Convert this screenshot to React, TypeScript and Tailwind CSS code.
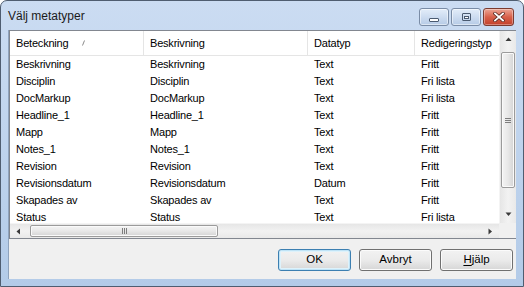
import React from 'react';

const rows: string[][] = [
  ['Beskrivning', 'Beskrivning', 'Text', 'Fritt'],
  ['Disciplin', 'Disciplin', 'Text', 'Fri lista'],
  ['DocMarkup', 'DocMarkup', 'Text', 'Fri lista'],
  ['Headline_1', 'Headline_1', 'Text', 'Fritt'],
  ['Mapp', 'Mapp', 'Text', 'Fritt'],
  ['Notes_1', 'Notes_1', 'Text', 'Fritt'],
  ['Revision', 'Revision', 'Text', 'Fritt'],
  ['Revisionsdatum', 'Revisionsdatum', 'Datum', 'Fritt'],
  ['Skapades av', 'Skapades av', 'Text', 'Fritt'],
  ['Status', 'Status', 'Text', 'Fri lista'],
];

function Arrow({ dir }: { dir: 'up' | 'down' | 'left' | 'right' }) {
  const pts = {
    up: '0.5,4 3.5,0.5 6.5,4',
    down: '0.5,0.5 3.5,4 6.5,0.5',
    left: '4,0.5 0.5,3.5 4,6.5',
    right: '0.5,0.5 4,3.5 0.5,6.5',
  }[dir];
  const vertical = dir === 'up' || dir === 'down';
  return (
    <svg width={vertical ? 7 : 5} height={vertical ? 5 : 7} viewBox={vertical ? '0 0 7 5' : '0 0 5 7'}>
      <polygon points={pts} fill="#3a3a3a" />
    </svg>
  );
}

function TitleButton({ kind }: { kind: 'min' | 'max' | 'close' }) {
  if (kind === 'close') {
    return (
      <div className="w-[31px] h-[18px] rounded-[3px] border border-[#7b3b30] bg-gradient-to-b from-[#eba595] via-[#d8604a] to-[#c2412b] flex items-center justify-center shadow-[inset_0_0_0_1px_rgba(255,255,255,0.35)]">
        <svg width="12" height="10" viewBox="0 0 12 10">
          <path d="M2 1.5 L10 8.5 M10 1.5 L2 8.5" stroke="#5a2a22" strokeWidth="3.4" strokeLinecap="square" />
          <path d="M2 1.5 L10 8.5 M10 1.5 L2 8.5" stroke="#ffffff" strokeWidth="1.8" strokeLinecap="square" />
        </svg>
      </div>
    );
  }
  return (
    <div className="w-[30px] h-[18px] rounded-[3px] border border-[#7a8ca6] bg-gradient-to-b from-[#e3edf9] via-[#cddcf0] to-[#b6cbe6] flex items-center justify-center shadow-[inset_0_0_0_1px_rgba(255,255,255,0.5)]">
      {kind === 'min' ? (
        <div className="w-[10px] h-[4px] mt-[5px] bg-white border border-[#4a5a70] rounded-[1px]" />
      ) : (
        <div className="w-[9px] h-[8px] bg-transparent border border-[#4a5a70] rounded-[1px] flex items-center justify-center">
          <div className="w-[5px] h-[3px] border border-[#4a5a70] bg-white" />
        </div>
      )}
    </div>
  );
}

function DialogButton({ children, primary = false }: { children: React.ReactNode; primary?: boolean }) {
  return (
    <div
      className={
        primary
          ? 'w-[73px] h-[22px] rounded-[3px] border border-[#3c7fb1] bg-gradient-to-b from-[#f2f2f2] via-[#ebebeb] to-[#d6d6d6] shadow-[inset_0_0_0_1px_#bfe3f6,inset_0_0_0_2px_#def2fb] flex items-center justify-center text-[11.5px] text-black'
          : 'w-[73px] h-[22px] rounded-[3px] border border-[#707070] bg-gradient-to-b from-[#f2f2f2] via-[#ebebeb] to-[#d6d6d6] shadow-[inset_0_0_0_1px_#fbfbfb] flex items-center justify-center text-[11.5px] text-black'
      }
    >
      {children}
    </div>
  );
}

export default function App() {
  const cols = ['w-[134px]', 'w-[164px]', 'w-[107px]', 'w-[84px]'];
  return (
    <div
      className="w-[524px] h-[287px] flex flex-col border border-[#4f5d70] rounded-t-[7px] overflow-hidden bg-gradient-to-b from-[#cbdcf2] to-[#b3cbe8]"
      style={{ fontFamily: '"Liberation Sans", Arial, sans-serif' }}
    >
      {/* Title bar */}
      <div className="h-[29px] flex items-start pl-[7px] pr-[9px]">
        <div className="mt-[8px] text-[12px] text-[#1a1a1a] leading-[14px]">Välj metatyper</div>
        <div className="ml-auto mt-[7px] flex gap-[2px]">
          <TitleButton kind="min" />
          <TitleButton kind="max" />
          <TitleButton kind="close" />
        </div>
      </div>

      {/* Body */}
      <div className="flex flex-1">
        <div className="w-[7px]" />
        <div className="w-[508px] h-[249px] bg-[#f0f0f0] flex flex-col border-l border-[#8fa3bd]">
          {/* List view */}
          <div className="h-[209px] border border-[#828790] bg-white grid grid-cols-[489px_17px] grid-rows-[192px_15px] text-[11px] tracking-[-0.2px] text-black">
            <div className="overflow-hidden">
              {/* Header */}
              <div className="h-[25px] flex border-b border-[#e5e5e5]">
                {['Beteckning', 'Beskrivning', 'Datatyp', 'Redigeringstyp'].map((h, i) => (
                  <div
                    key={h}
                    className={`${cols[i]} shrink-0 flex items-center pl-[6px] ${i < 3 ? 'border-r border-[#e5e5e5]' : ''} whitespace-nowrap overflow-hidden`}
                  >
                    <span>{h}</span>
                    {i === 0 && (
                      <svg className="ml-[14px]" width="3" height="6" viewBox="0 0 3 6">
                        <path d="M0.5 5.5 L2.5 0.5" stroke="#8a8a8a" strokeWidth="1" />
                      </svg>
                    )}
                  </div>
                ))}
              </div>
              {/* Rows */}
              {rows.map((r) => (
                <div key={r[0]} className="h-[17px] flex items-center">
                  {r.map((c, i) => (
                    <div key={i} className={`${cols[i]} shrink-0 pl-[6px] whitespace-nowrap overflow-hidden leading-[17px]`}>
                      {c}
                    </div>
                  ))}
                </div>
              ))}
            </div>

            {/* Vertical scrollbar */}
            <div className="row-span-1 flex flex-col bg-gradient-to-r from-[#e6e6e6] via-[#f2f2f2] to-[#e9e9e9] border-l border-[#f4f4f4]">
              <div className="h-[17px] flex items-center justify-center">
                <Arrow dir="up" />
              </div>
              <div className="h-[4px]" />
              <div className="mx-[1px] h-[136px] rounded-[2px] border border-[#9b9b9b] bg-gradient-to-r from-[#f4f4f4] via-[#e8e8e8] to-[#d4d4d4] shadow-[inset_0_0_0_1px_#fafafa] flex flex-col items-center justify-center gap-[1px]">
                <div className="w-[6px] h-[1px] bg-[#7d7d7d]" />
                <div className="w-[6px] h-[1px] bg-[#7d7d7d]" />
                <div className="w-[6px] h-[1px] bg-[#7d7d7d]" />
              </div>
              <div className="flex-1" />
              <div className="h-[17px] flex items-center justify-center">
                <Arrow dir="down" />
              </div>
            </div>

            {/* Horizontal scrollbar */}
            <div className="flex items-stretch bg-gradient-to-b from-[#e6e6e6] via-[#f2f2f2] to-[#e9e9e9] border-t border-[#f4f4f4]">
              <div className="w-[17px] flex items-center justify-center">
                <Arrow dir="left" />
              </div>
              <div className="w-[3px]" />
              <div className="w-[188px] my-[1px] rounded-[2px] border border-[#9b9b9b] bg-gradient-to-b from-[#f4f4f4] via-[#e8e8e8] to-[#d4d4d4] shadow-[inset_0_0_0_1px_#fafafa] flex items-center justify-center gap-[1px]">
                <div className="w-[1px] h-[6px] bg-[#7d7d7d]" />
                <div className="w-[1px] h-[6px] bg-[#7d7d7d]" />
                <div className="w-[1px] h-[6px] bg-[#7d7d7d]" />
              </div>
              <div className="flex-1" />
              <div className="w-[17px] flex items-center justify-center">
                <Arrow dir="right" />
              </div>
            </div>

            {/* Corner */}
            <div className="bg-[#f0f0f0]" />
          </div>

          {/* Buttons */}
          <div className="flex justify-end gap-[8px] pr-[3px] pt-[10px]">
            <DialogButton primary>OK</DialogButton>
            <DialogButton>Avbryt</DialogButton>
            <DialogButton>
              <span>
                <span className="underline underline-offset-2">H</span>jälp
              </span>
            </DialogButton>
          </div>
        </div>
        <div className="flex-1" />
      </div>
    </div>
  );
}
